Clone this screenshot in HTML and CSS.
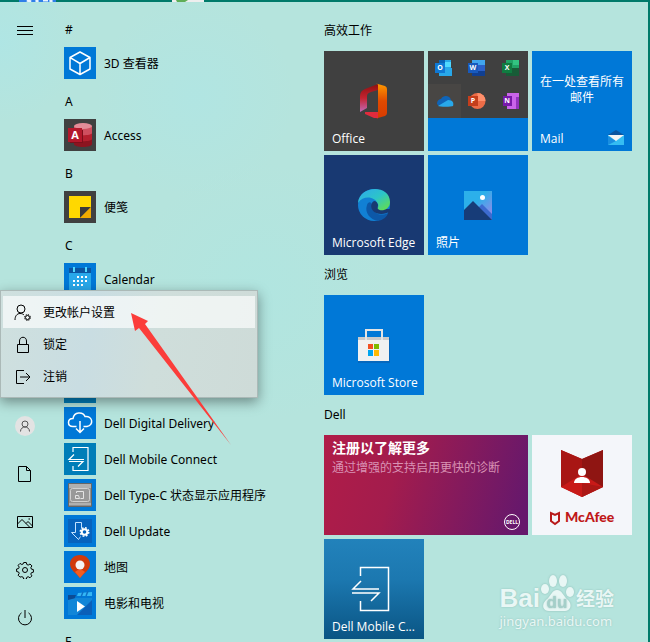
FILE: index.html
```
<!DOCTYPE html>
<html lang="zh-CN">
<head>
    <meta charset="UTF-8">
    <meta name="viewport" content="width=device-width, initial-scale=1.0">
    <title>Start Menu</title>
    <link rel="stylesheet" href="styles.css">
</head>
<body>
    <!-- Strip of desktop above the menu -->
    <div class="desktop-strip">
        <svg width="204" height="2" viewBox="0 0 204 2" aria-hidden="true">
            <path fill="#2f7fe8" d="M18 0h37v2H18z"/>
            <path stroke="#e8f3ff" stroke-width="3" d="M26 0l4 2M37 0l-2 2M42 0h5M51 0l-2 2"/>
            <path fill="#eee" d="M171 0h32v2h-32z"/>
            <path fill="#5fae57" d="M175 0h12l-3 2h-8z"/>
        </svg>
    </div>

    <main class="start-menu">
        <!-- Left rail -->
        <nav class="rail">
            <button class="rail-button" aria-label="开始">
                <svg width="18" height="18" viewBox="0 0 18 18"><path d="M1 5.500h16M1 9.500h16M1 13.500h16"/></svg>
            </button>
            <div class="rail-bottom">
                <button class="rail-button" aria-label="帐户">
                    <svg class="avatar" width="20" height="20" viewBox="0 0 20 20">
                        <circle class="avatar-bg" cx="10" cy="10" r="10"/>
                        <circle cx="10" cy="8" r="3"/>
                        <path d="M5.500 15.500c0-6 9-6 9 0"/>
                    </svg>
                </button>
                <button class="rail-button" aria-label="文档">
                    <svg width="18" height="18" viewBox="0 0 18 18"><path d="M2.500 1.500h8l4 4v11h-12zM10.500 1.500v4h4"/></svg>
                </button>
                <button class="rail-button" aria-label="图片">
                    <svg width="18" height="18" viewBox="0 0 18 18"><path d="M1.500 3.500h15v11h-15zM1.500 11l4.500-4.500 7.500 7.500M10 10.500l2-2 4.500 4.500M12.500 6h1.500"/></svg>
                </button>
                <button class="rail-button" aria-label="设置">
                    <svg width="18" height="18" viewBox="0 0 18 18">
                        <circle cx="9" cy="9" r="2.500"/>
                        <path d="M7.700 1.500h2.600l.5 2 1.400.6 1.800-1.100 1.900 1.900-1.100 1.800.6 1.400 2 .5v2.600l-2 .5-.6 1.400 1.100 1.800-1.900 1.900-1.800-1.100-1.400.6-.5 2H7.700l-.5-2-1.400-.6L4 16.100l-1.900-1.900 1.100-1.800-.6-1.400-2-.5V8l2-.5.6-1.400L2.100 4.300 4 2.400l1.800 1.100 1.400-.6z"/>
                    </svg>
                </button>
                <button class="rail-button" aria-label="电源">
                    <svg width="18" height="18" viewBox="0 0 18 18"><path d="M9 1v8M5.500 3.900a6.500 6.500 0 1 0 7 0"/></svg>
                </button>
            </div>
        </nav>

        <!-- All apps -->
        <section class="apps">
            <h2 class="letter">#</h2>
            <a class="app" href="#">
                <svg class="app-icon blue" viewBox="0 0 32 32"><path fill="none" stroke="#fff" stroke-width="1.500" stroke-linejoin="round" d="M16 5l10 5.500v11.500l-10 5.500-10-5.500V10.500zM6 10.500l4 2.300M10 12.800l6 3.700v11M16 16.500l10-6"/></svg>
                <span>3D 查看器</span>
            </a>
            <h2 class="letter">A</h2>
            <a class="app" href="#">
                <svg class="app-icon dark" viewBox="0 0 32 32">
                    <path fill="#8c1420" d="M10 7h18v18c0 4-18 4-18 0z"/>
                    <path fill="#b5202f" d="M10 7h18v13c0 3-18 3-18 0z"/>
                    <path fill="#cf4f5f" d="M10 7h18v7c0 3-18 3-18 0z"/>
                    <ellipse fill="#e38c98" cx="19" cy="7" rx="9" ry="3"/>
                    <path fill="#7d0f1b" d="M6 11h13v13H6z"/>
                    <path fill="#b3182b" d="M4 9h14v14H4z"/>
                    <text class="glyph" x="11" y="20" font-size="11">A</text>
                </svg>
                <span>Access</span>
            </a>
            <h2 class="letter">B</h2>
            <a class="app" href="#">
                <svg class="app-icon dark" viewBox="0 0 32 32">
                    <path fill="#ffd800" d="M5 5h22v11L16 27H5z"/>
                    <path fill="#3a3a3a" d="M16 16h11L16 27z"/>
                    <path fill="#f0ab00" d="M27 16v11H16z"/>
                </svg>
                <span>便笺</span>
            </a>
            <h2 class="letter">C</h2>
            <a class="app" href="#">
                <svg class="app-icon blue" viewBox="0 0 32 32">
                    <path fill="#28a8ea" d="M5 9h22v18H5z"/>
                    <path fill="#0b55a0" d="M5 5h22v5H5z"/>
                    <path fill="#50d9ff" d="M9 4h2v5H9zM21 4h2v5h-2z"/>
                    <path fill="none" stroke="#fff" stroke-width="2" stroke-dasharray="2 2" d="M13 14h11M9 18h15M9 22h11"/>
                </svg>
                <span>Calendar</span>
            </a>
            <div class="letter"></div>
            <div class="app"></div>
            <div class="app"><span class="app-icon teal"></span></div>
            <a class="app" href="#">
                <svg class="app-icon blue" viewBox="0 0 32 32"><path fill="none" stroke="#fff" stroke-width="1.500" d="M12.500 19.500H9c-6 0-6-8 0-8 1-7 10-7 12-2 8-1 9 9 2 10h-3.500M16 14v11M12 21.500l4 4 4-4"/></svg>
                <span>Dell Digital Delivery</span>
            </a>
            <a class="app" href="#">
                <svg class="app-icon teal" viewBox="0 0 32 32"><path fill="none" stroke="#fff" stroke-width="1.200" d="M9 9V4.500h15v23H9V23M20 16.500H5l5-5M5 18.500h14l-5 5"/></svg>
                <span>Dell Mobile Connect</span>
            </a>
            <a class="app" href="#">
                <svg class="app-icon blue" viewBox="0 0 32 32">
                    <path fill="#909090" stroke="#666" d="M4.500 4.500h23v23h-23z"/>
                    <path fill="#b0b0b0" d="M5 5h22v4H5zM5 24h22v2H5z"/>
                    <rect fill="#999" stroke="#d0d0d0" x="6.500" y="9.500" width="19" height="13" rx="2"/>
                    <path fill="none" stroke="#e4e4e4" d="M12.500 14v-1.500h7v7h-3M11.500 16.500h3l1 3h-4z"/>
                </svg>
                <span>Dell Type-C 状态显示应用程序</span>
            </a>
            <a class="app" href="#">
                <svg class="app-icon blue" viewBox="0 0 32 32">
                    <path fill="#0763bd" d="M4 4h24v24H4z"/>
                    <path fill="none" stroke="#c5e2ff" d="M11.500 7.500h6v6M11.500 7.500v10h-4l7 7 2-3"/>
                    <circle fill="none" stroke="#fff" stroke-width="2" cx="20.500" cy="17" r="2.800"/>
                    <circle fill="none" stroke="#fff" stroke-width="1.500" stroke-dasharray="1.800 1.540" cx="20.500" cy="17" r="4.250"/>
                </svg>
                <span>Dell Update</span>
            </a>
            <a class="app" href="#">
                <svg class="app-icon blue" viewBox="0 0 32 32">
                    <path fill="#d13a0b" d="M16 4c6 0 10 4 10 9 0 6-6 9-10 14C12 22 6 19 6 13c0-5 4-9 10-9z"/>
                    <path fill="#f25d20" d="M11 21c3-3 7-3 10 0l-5 6z"/>
                    <circle fill="#f4f4f4" cx="16" cy="14" r="4.500"/>
                </svg>
                <span>地图</span>
            </a>
            <a class="app" href="#">
                <svg class="app-icon blue" viewBox="0 0 32 32">
                    <path fill="#0c4b94" d="M4 8l4 4H4zM4 8h8l-2 5H4z"/>
                    <path fill="#34b6f5" d="M14 6l14-1v4H13z"/>
                    <path stroke="#0e6fc4" stroke-width="1.500" d="M19 5l-2 5M24 4l-2 5"/>
                    <path fill="#1286d8" d="M4 13l8-2h16v17H4z"/>
                    <path fill="#0b5fb8" d="M28 13v15H13z"/>
                    <path fill="#fff" d="M13 14l8 5.500-8 5.500z"/>
                </svg>
                <span>电影和电视</span>
            </a>
            <h2 class="letter">F</h2>
        </section>

        <!-- Pinned tiles -->
        <section class="tiles">
            <h2 class="group-title">高效工作</h2>
            <div class="tile-grid">
                <button class="tile dark">
                    <svg class="art" viewBox="0 0 100 100">
                        <defs>
                            <linearGradient id="office-left" x1="0" y1="0" x2="0" y2="1">
                                <stop offset="0" stop-color="#8e1010"/><stop offset=".5" stop-color="#c42330"/><stop offset="1" stop-color="#c06ab8"/>
                            </linearGradient>
                            <linearGradient id="office-right" x1="0" y1="0" x2="0" y2="1">
                                <stop offset="0" stop-color="#ff9a00"/><stop offset=".5" stop-color="#e04a00"/><stop offset="1" stop-color="#d83b01"/>
                            </linearGradient>
                        </defs>
                        <path fill="url(#office-left)" d="M54 33l-13 5q-5 2-5 7v16l7-4V45q0-3 4-4l7-2z"/>
                        <path fill="#e22b3d" d="M41 61h13v6h-4l-9-4z"/>
                        <path fill="url(#office-right)" d="M52 32.500l9 2.500q2 1 2 3v24q0 2-2 3l-9 2.500h2v-34z"/>
                    </svg>
                    <span class="tile-label">Office</span>
                </button>
                <button class="tile blue" aria-label="Office 应用">
                    <svg class="art" viewBox="0 0 100 100">
                        <path fill="#404040" d="M0 0h100v67H0z"/>
                        <path fill="#484644" d="M0 33h33v34H0z"/>
                        <path fill="#28a8ea" d="M11 9h12v8h1v8H11z"/>
                        <path fill="#0a64b8" d="M11 9h6v8h-6z"/>
                        <path fill="#50d9ff" d="M17 11h6v5h-6z"/>
                        <path fill="#0f78d4" d="M7 12h10v10H7z"/>
                        <path fill="#2b60c8" d="M44 9h13v16H44z"/>
                        <path fill="#41a5ee" d="M44 9h13v5H44z"/>
                        <path fill="#103f91" d="M44 20h13v5H44z"/>
                        <path fill="#185abd" d="M40 12h10v10H40z"/>
                        <path fill="#21a366" d="M78 9h13v16H78z"/>
                        <path fill="#33c481" d="M85 9h6v5h-6z"/>
                        <path fill="#185c37" d="M78 17h13v8H78z"/>
                        <path fill="#107c41" d="M74 12h10v10H74z"/>
                        <path fill="#0f64b8" d="M9 53c0-4 3-5 4-5 3-5 9-3 10 1l-6 6h-6z"/>
                        <path fill="#28a8ea" d="M10 55l10-6c5 0 6 3 5 6-1 1-14 1-15 0z"/>
                        <circle fill="#ed6c47" cx="49.500" cy="50" r="8"/>
                        <path fill="#ff8f6b" d="M49.500 42a8 8 0 0 1 8 8h-8z"/>
                        <path fill="#c43e1c" d="M40 45h10v10H40z"/>
                        <path fill="#ca64ea" d="M79 42h12v16H79z"/>
                        <path fill="#9332bf" d="M88 46h3v12h-3z"/>
                        <path fill="#7719aa" d="M75 45h9v10h-9z"/>
                        <g class="glyph" font-size="7">
                            <text x="12" y="19">O</text><text x="45" y="19">W</text><text x="79" y="19">X</text>
                            <text x="45" y="52">P</text><text x="79" y="52">N</text>
                        </g>
                    </svg>
                </button>
                <button class="tile blue">
                    <svg class="art" viewBox="0 0 100 100">
                        <path fill="#0b55a0" d="M76 84l8-5 8 5z"/>
                        <path fill="#35bdf2" d="M76 84h16v10H76z"/>
                        <path fill="#1a8ee0" d="M76 94V85l8 5z"/>
                        <path fill="#f5f5f5" d="M76 84h16l-8 6z"/>
                    </svg>
                    <span class="tile-message">在一处查看所有邮件</span>
                    <span class="tile-label">Mail</span>
                </button>
                <button class="tile navy">
                    <svg class="art" viewBox="0 0 100 100">
                        <defs>
                            <linearGradient id="edge-top" x1="0" y1="0" x2="1" y2="1">
                                <stop offset="0" stop-color="#2ea8ee"/><stop offset=".5" stop-color="#2cc5c8"/><stop offset="1" stop-color="#6be23c"/>
                            </linearGradient>
                        </defs>
                        <circle fill="#1180d4" cx="50" cy="50" r="16"/>
                        <path fill="#0d58a8" d="M43 50c-3 8 4 15 11 16 5-1 9-4 10-8-8 4-16 0-16-8-1-4-4-3-5 0z"/>
                        <path fill="#183972" d="M50 46c-4 2-4 9 2 12 5 2 10 1 15-2v-2H55c-2-1-1-3-1-4 0-2-2-4-4-4z"/>
                        <path fill="url(#edge-top)" d="M34 48c1-18 32-19 32-1 0 8-9 10-12 7-1-1 1-2 0-5-3-8-15-9-20-1z"/>
                    </svg>
                    <span class="tile-label">Microsoft Edge</span>
                </button>
                <button class="tile blue">
                    <svg class="art" viewBox="0 0 100 100">
                        <defs>
                            <linearGradient id="photo-sky" x1="0" y1="0" x2="1" y2="1">
                                <stop offset=".4" stop-color="#2cb0ea"/><stop offset="1" stop-color="#a582e8"/>
                            </linearGradient>
                        </defs>
                        <path fill="url(#photo-sky)" d="M36 36h28v29H36z"/>
                        <path fill="#3c6bd0" d="M48 55l6-6 10 10v6H50z"/>
                        <path fill="#173c78" d="M36 55l9-9 19 19H36z"/>
                        <circle fill="#fff" cx="54.500" cy="42.500" r="2.500"/>
                    </svg>
                    <span class="tile-label">照片</span>
                </button>
            </div>

            <h2 class="group-title">浏览</h2>
            <div class="tile-grid">
                <button class="tile blue">
                    <svg class="art" viewBox="0 0 100 100">
                        <path fill="#0668bd" d="M34 43h32v25H34z"/>
                        <path fill="#f1f1f1" d="M34 42h31v24H34z"/>
                        <path fill="#cacaca" d="M34 42h31v3H34z"/>
                        <path fill="none" stroke="#e4e4e4" stroke-width="2" d="M42 45V35h16v10"/>
                        <path fill="#f25022" d="M44 49h5v5h-5z"/>
                        <path fill="#7fba00" d="M50 49h5v5h-5z"/>
                        <path fill="#00a4ef" d="M44 55h5v6h-5z"/>
                        <path fill="#ffb900" d="M50 55h5v6h-5z"/>
                    </svg>
                    <span class="tile-label">Microsoft Store</span>
                </button>
            </div>

            <h2 class="group-title">Dell</h2>
            <div class="tile-grid">
                <button class="tile wide">
                    <span class="promo">
                        <strong>注册以了解更多</strong>
                        <span>通过增强的支持启用更快的诊断</span>
                    </span>
                    <svg class="dell-logo" width="16" height="16" viewBox="0 0 16 16">
                        <circle fill="none" stroke="#fff" cx="8" cy="8" r="7.500"/>
                        <text class="glyph" x="8" y="10" font-size="5">DELL</text>
                    </svg>
                </button>
                <button class="tile white">
                    <svg class="art" viewBox="0 0 100 100">
                        <path fill="#c01818" d="M29 15l21 9 21-9v37l-21 10-21-10z"/>
                        <path fill="#8f1512" d="M50 24l21-9v37l-21-9z"/>
                        <path fill="#a81614" d="M29 15l21 9v19L29 52z"/>
                        <path fill="#c81a18" d="M29 52l21-13 21 13-21 10z"/>
                        <path fill="#8f1512" d="M50 48l21 4-21 10z" opacity=".5"/>
                        <circle fill="#fff" cx="50" cy="37" r="4"/>
                        <path fill="#fff" d="M42 48c0-8 16-8 16 0z"/>
                        <path fill="none" stroke="#b81a1a" stroke-width="2" d="M19 78v8l4 3 4-3v-8l-4 2z"/>
                        <text class="mcafee" x="33" y="87">McAfee</text>
                    </svg>
                </button>
                <button class="tile mobile">
                    <svg class="art" viewBox="0 0 100 100"><path fill="none" stroke="#fff" stroke-width="1.500" d="M36.500 37v-8.500h28v43h-28V62M55 50H29l8-8M28 54h27l-8 8"/></svg>
                    <span class="tile-label">Dell Mobile C...</span>
                </button>
            </div>
        </section>
    </main>

    <!-- Account menu -->
    <div class="account-menu">
        <button class="menu-item active">
            <svg width="18" height="18" viewBox="0 0 18 18">
                <circle cx="7" cy="5" r="4"/>
                <path d="M1 16c0-4 2-6.500 5-6.500 2 0 3 .5 4 1.500"/>
                <circle cx="13.500" cy="13.500" r="2"/>
                <circle cx="13.500" cy="13.500" r="3" stroke-dasharray="1.200 1.150"/>
            </svg>
            更改帐户设置
        </button>
        <button class="menu-item">
            <svg width="18" height="18" viewBox="0 0 18 18"><path d="M3.500 8.500h11v8h-11zM5.500 8.500V5c0-5 7-5 7 0v3.500"/></svg>
            锁定
        </button>
        <button class="menu-item">
            <svg width="18" height="18" viewBox="0 0 18 18"><path d="M10 2.500H2.500v13H10M6 9h10M12 5l4 4-4 4"/></svg>
            注销
        </button>
    </div>

    <svg class="arrow" width="100" height="132" viewBox="0 0 100 132" aria-hidden="true">
        <path fill="#fb3d3a" d="M0 0l17 8-3 3 86 121L8 15l-4 3z"/>
    </svg>

    <!-- Watermark -->
    <div class="watermark">
        <div class="watermark-logo">
            <span>Bai</span>
            <svg width="34" height="38" viewBox="0 0 34 38">
                <ellipse cx="5" cy="15" rx="4" ry="5"/>
                <ellipse cx="13" cy="7" rx="4" ry="6"/>
                <ellipse cx="23" cy="7" rx="4" ry="6"/>
                <ellipse cx="30" cy="18" rx="4" ry="5"/>
                <path d="M17 16c5 0 6 6 11 10 5 5 2 11-3 11H9c-6 0-8-6-3-11 5-4 6-10 11-10z"/>
                <text x="17" y="34">du</text>
            </svg>
            <span class="watermark-cn">经验</span>
        </div>
        <div class="watermark-url">jingyan.baidu.com</div>
    </div>
</body>
</html>
```
FILE: styles.css
```
/* Global Styles */
* {
    box-sizing: border-box;
}

body {
    font-family: "Noto Sans", "Noto Sans CJK SC", sans-serif;
    font-size: 12px;
    line-height: 16px;
    color: #000;
    background-color: #007a6a;
    margin: 0;
    height: 100vh;
    display: flex;
    flex-direction: column;
    position: relative;
    overflow: hidden;
}

button {
    font: inherit;
    color: inherit;
    background: none;
    border: none;
    padding: 0;
    cursor: pointer;
}

h2 {
    font-size: 12px;
    font-weight: normal;
    margin: 0;
}

.desktop-strip {
    height: 2px;
    padding-left: 1px;
}

.desktop-strip svg {
    display: block;
}

/* Start Menu */
.start-menu {
    flex: 1;
    min-height: 0;
    display: flex;
    margin-right: 2px;
    overflow: hidden;
    background-color: #b5e4dd;
    background-image:
        radial-gradient(circle at 195px 95px, rgba(174, 230, 230, 0.6), rgba(174, 230, 230, 0) 100px),
        radial-gradient(circle at 0 40px, rgba(174, 230, 230, 0.8), rgba(174, 230, 230, 0) 80px),
        radial-gradient(circle at 260px 290px, rgba(174, 230, 226, 0.6), rgba(174, 230, 226, 0) 130px);
}

/* Rail */
.rail {
    width: 50px;
    flex: none;
    display: flex;
    flex-direction: column;
    justify-content: space-between;
    padding-top: 4px;
}

.rail-button {
    width: 50px;
    height: 48px;
    display: flex;
    align-items: center;
    justify-content: center;
}

.rail svg,
.account-menu svg {
    fill: none;
    stroke: #000;
    flex: none;
}

.rail .avatar {
    stroke: #555;
}

.avatar-bg {
    fill: #e3e3e3;
    stroke: none;
}

/* App List */
.apps {
    width: 274px;
    flex: none;
    padding: 7px 0 0 14px;
}

.letter {
    height: 36px;
    padding: 13px 0 0 1px;
}

.app {
    height: 36px;
    display: flex;
    align-items: center;
    gap: 8px;
    color: #000;
    text-decoration: none;
    white-space: nowrap;
}

.app span {
    padding-top: 2px;
}

.app-icon {
    width: 32px;
    height: 32px;
    flex: none;
}

.glyph {
    fill: #fff;
    font-family: "Open Sans", sans-serif;
    font-weight: bold;
    text-anchor: middle;
}

/* Colours */
.blue {
    background-color: #0078d7;
}

.dark {
    background-color: #404040;
}

.teal {
    background-color: #007db8;
}

.navy {
    background-color: #183972;
}

.white {
    background-color: #f4f6fa;
}

.mobile {
    background-image: linear-gradient(#2282bb, #1c78b0 40%, #0a5584);
}

/* Tiles */
.tiles {
    flex: 1;
    padding-top: 9px;
}

.group-title {
    height: 40px;
    line-height: 40px;
}

.tile-grid {
    display: grid;
    grid-template-columns: repeat(3, 100px);
    grid-auto-rows: 100px;
    gap: 4px;
}

.tile {
    display: grid;
    color: #fff;
    text-align: left;
}

.tile > * {
    grid-area: 1 / 1;
}

.art {
    width: 100px;
    height: 100px;
}

.tile-label {
    align-self: end;
    padding: 0 0 4px 8px;
    font-family: "Open Sans", "Noto Sans CJK SC", sans-serif;
    white-space: nowrap;
}

.tile-message {
    padding: 23px 6px 0;
    text-align: center;
}

.wide {
    grid-column: span 2;
    background-image: linear-gradient(105deg, #b01c48, #a31c4d 35%, #66186c 95%);
}

.promo {
    padding: 4px 8px;
    display: flex;
    flex-direction: column;
    gap: 3px;
    color: #d992b4;
}

.promo strong {
    font-size: 14px;
    line-height: 18px;
    color: #fff;
}

.dell-logo {
    align-self: end;
    justify-self: end;
    margin: 0 8px 5px 0;
}

.mcafee {
    fill: #c01818;
    font-family: Lato, sans-serif;
    font-size: 14px;
    font-weight: 900;
}

/* Account Menu */
.account-menu {
    position: absolute;
    left: 0;
    top: 290px;
    width: 258px;
    padding: 5px 2px;
    background-image: linear-gradient(100deg, #cfe0de, #c9dde2 35%, #cfdedb 60%, #cedbd8);
    border: 1px solid #abb9b7;
    box-shadow: 0 4px 12px rgba(0, 0, 0, 0.4);
}

.menu-item {
    width: 100%;
    height: 32px;
    display: flex;
    align-items: center;
    gap: 11px;
    padding: 1px 0 0 11px;
}

.menu-item.active {
    background-color: rgba(255, 255, 255, 0.65);
}

/* Arrow */
.arrow {
    position: absolute;
    left: 131px;
    top: 313px;
}

/* Watermark */
.watermark {
    position: absolute;
    right: 36px;
    bottom: 12px;
    color: #e9f7f5;
    text-shadow: 0 0 2px #8fbdb7;
}

.watermark-logo {
    display: flex;
    align-items: flex-end;
    font-family: "Liberation Sans", sans-serif;
    font-size: 26px;
    font-weight: bold;
    line-height: 28px;
}

.watermark-logo svg {
    fill: #e9f7f5;
    filter: drop-shadow(0 0 1px #8fbdb7);
}

.watermark-logo text {
    fill: #a5cfc9;
    font-size: 17px;
    text-anchor: middle;
}

.watermark-cn {
    font-family: "Noto Sans CJK SC", sans-serif;
    font-size: 19px;
    font-weight: bold;
    padding-left: 2px;
}

.watermark-url {
    font-size: 13px;
    line-height: 18px;
}
```
